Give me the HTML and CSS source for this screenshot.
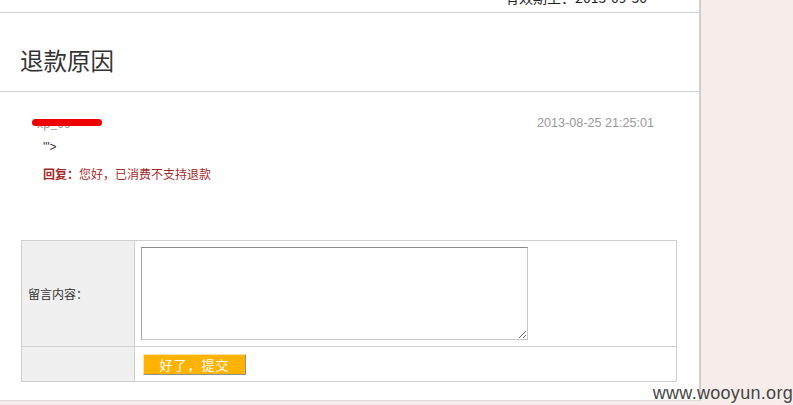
FILE: index.html
```html
<!DOCTYPE html>
<html lang="zh">
<head>
<meta charset="utf-8">
<link rel="stylesheet" href="styles.css">
</head>
<body>
<div class="panel">
  <div class="topbar"><span class="topbar-text">有效期至：2013-09-30</span></div>
  <div class="title-wrap"><h1 class="title">退款原因</h1></div>
  <div class="comment">
    <div class="comment-head">
      <span class="user">xp_66<span class="scribble"></span></span>
      <span class="date">2013-08-25 21:25:01</span>
    </div>
    <div class="comment-body">'"&gt;</div>
    <div class="reply"><b>回复：</b>您好，已消费不支持退款</div>
  </div>
  <table class="form">
    <tr class="row-msg">
      <td class="label">留言内容：</td>
      <td class="field"><textarea class="msg"></textarea></td>
    </tr>
    <tr class="row-btn">
      <td class="label"></td>
      <td class="field"><button class="submit">好了，提交</button></td>
    </tr>
  </table>
</div>
<div class="watermark">www.wooyun.org</div>
</body>
</html>
```

FILE: styles.css
```css
html, body {
  margin: 0;
  padding: 0;
}
body {
  background: #f6edeb;
  font-family: "Noto Sans CJK SC", "Liberation Sans", sans-serif;
  font-size: 12px;
  color: #333;
  height: 405px;
  overflow: hidden;
  position: relative;
}
.panel {
  width: 701px;
  height: 401px;
  background: #fff;
  border-right: 2px solid #cfcfcf;
  border-bottom: 1px solid #ddd;
  box-sizing: border-box;
}
.topbar {
  height: 12px;
  border-bottom: 1px solid #cfcfcf;
  overflow: hidden;
  display: flex;
  justify-content: flex-end;
  padding-right: 52px;
}
.topbar-text {
  font-size: 14px;
  line-height: 14px;
  margin-top: -10px;
  color: #222;
  height: 14px;
}
.title-wrap {
  padding: 32px 20px 16px;
  border-bottom: 1px solid #cfcfcf;
}
.title {
  margin: 0;
  font-size: 23.5px;
  line-height: 30px;
  font-weight: normal;
  color: #333;
}
.comment {
  padding: 21px 45px 0 43px;
  height: 148px;
  box-sizing: border-box;
}
.comment-head {
  display: flex;
  justify-content: space-between;
  line-height: 20px;
  margin-left: -10px;
}
.user {
  position: relative;
  color: #999;
  padding-left: 4px;
}
.scribble {
  position: absolute;
  left: -1px;
  top: 6px;
  width: 70px;
  height: 7px;
  border-radius: 4px;
  background: #ee0000;
}
.date {
  color: #999;
  font-family: "Liberation Sans", sans-serif;
  font-size: 12.6px;
}
.comment-body {
  margin-top: 4px;
  line-height: 20px;
  color: #333;
  font-family: "Liberation Sans", sans-serif;
}
.reply {
  margin-top: 7px;
  line-height: 20px;
  color: #a52a2a;
}
.reply b {
  color: #a52a2a;
}
.form {
  margin-left: 21px;
  width: 656px;
  border-collapse: collapse;
}
.form td {
  border: 1px solid #cfcfcf;
  padding: 0;
}
.label {
  width: 106px;
  background: #f0f0f0;
  padding-left: 6px !important;
  color: #333;
}
.field {
  padding: 6px !important;
  vertical-align: top;
}
.row-btn .field {
  padding: 7px 8px 6px 8px !important;
}
.msg {
  display: block;
  width: 387px;
  height: 93px;
  box-sizing: border-box;
  border: 1px solid #c8c8c8;
  border-top-color: #8a8a8a;
  border-left-color: #a8a8a8;
  margin: 0;
  padding: 2px;
  resize: both;
}
.submit {
  display: block;
  width: 103px;
  height: 21px;
  background: #ffb200;
  color: #fff;
  font-family: "Noto Sans CJK SC", sans-serif;
  font-size: 13px;
  line-height: 19px;
  letter-spacing: 1px;
  border: 1px solid;
  border-color: #ffe6a8 #8f8f8f #8f8f8f #ffe6a8;
  padding: 0;
  margin: 0;
}
.watermark {
  position: absolute;
  right: 0;
  top: 382px;
  font-family: "Liberation Sans", sans-serif;
  font-size: 18px;
  line-height: 22px;
  color: #454545;
  letter-spacing: 0.3px;
}
```
